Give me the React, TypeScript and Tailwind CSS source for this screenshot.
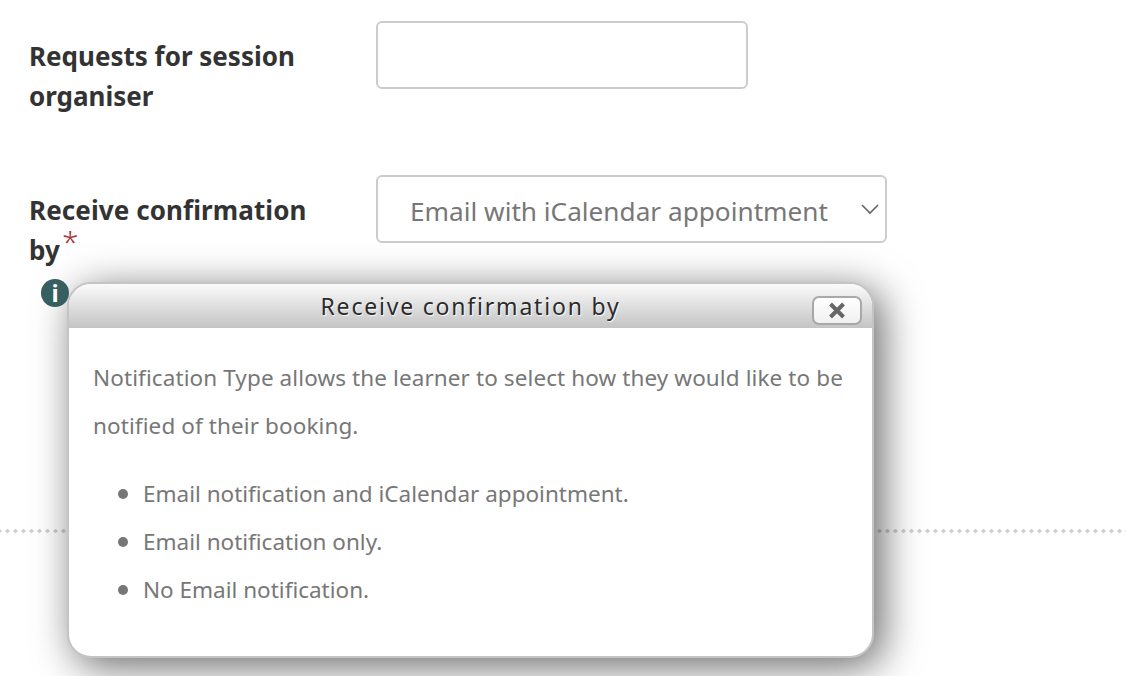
import React from "react";

function Close() {
  return (
    <button className="absolute right-[10px] top-[12px] flex h-[29px] w-[50px] items-center justify-center rounded-[7px] border-2 border-[#a8a8a8] bg-gradient-to-b from-[#ffffff] to-[#f0f0f0]">
      <svg width="18" height="17" viewBox="0 0 18 17">
        <path d="M2.5 2 L15.5 15 M15.5 2 L2.5 15" stroke="#666666" strokeWidth="4" fill="none" />
      </svg>
    </button>
  );
}

function Item({ children }: { children: React.ReactNode }) {
  return (
    <li className="flex items-center gap-[15px]">
      <span className="h-[10px] w-[10px] rounded-full bg-[#777777]" />
      <span>{children}</span>
    </li>
  );
}

export default function App() {
  return (
    <div className="relative h-[676px] w-[1126px] overflow-hidden bg-white font-['Noto_Sans','Open_Sans',sans-serif] text-[#333333]">
      <div className="flex flex-col px-[29px] pt-[21px]">
        <div className="flex h-[154px]">
          <div className="w-[347px] pt-[15px] text-[26px] font-bold leading-[40px]">
            Requests for session
            <br />
            organiser
          </div>
          <div className="h-[68px] w-[372px] rounded-[6px] border-2 border-[#cccccc] bg-white" />
        </div>
        <div className="flex">
          <div className="w-[347px] pt-[15px] text-[26px] font-bold leading-[40px] tracking-[0.1px]">
            Receive confirmation
            <br />
            by<span className="relative top-[-7px] ml-[2px] text-[30px] font-light leading-[0] text-[#a33a3a]">*</span>
          </div>
          <div className="relative flex h-[68px] w-[511px] items-center rounded-[6px] border-2 border-[#cccccc] bg-white pl-[32px] pt-[5px] text-[26.2px] text-[#777777]">
            Email with iCalendar appointment
            <svg className="absolute right-[5px] top-[26px]" width="20" height="12" viewBox="0 0 20 12">
              <path d="M2 2 L10 10 L18 2" stroke="#666666" strokeWidth="1.6" fill="none" />
            </svg>
          </div>
        </div>
      </div>

      <div className="absolute left-0 right-0 top-[529px] h-[4px] bg-[radial-gradient(circle,#cfcfcf_2px,transparent_2px)] bg-[length:8px_4px] bg-[position:-4.5px_0]" />

      <div className="absolute left-[41px] top-[279px] z-20 flex h-[28px] w-[28px] items-center justify-center rounded-full bg-[#375f62] text-[24px] font-bold leading-none text-white">
        i
      </div>

      <div className="absolute left-[67px] top-[282px] z-10 h-[376px] w-[807px] rounded-[24px] border-2 border-[#c4c4c4] bg-white shadow-[8px_8px_40px_rgba(0,0,0,0.6)]">
        <div className="relative flex h-[44px] items-center justify-center rounded-t-[22px] bg-gradient-to-b from-[#fbfbfb] to-[#c4c4c4] text-[23px] tracking-[1.8px] text-[#2b2b2b] [text-shadow:1px_1px_1px_rgba(255,255,255,0.9)]">
          Receive confirmation by
          <Close />
        </div>
        <div className="pl-[24px] pr-[10px] pt-[26px] text-[22.5px] leading-[48px] text-[#777777]">
          <p className="tracking-[0.1px]">
            Notification Type allows the learner to select how they would like to be
            <br />
            notified of their booking.
          </p>
          <ul className="mt-[20px] list-none pl-[25px]">
            <Item>Email notification and iCalendar appointment.</Item>
            <Item>Email notification only.</Item>
            <Item>No Email notification.</Item>
          </ul>
        </div>
      </div>
    </div>
  );
}
